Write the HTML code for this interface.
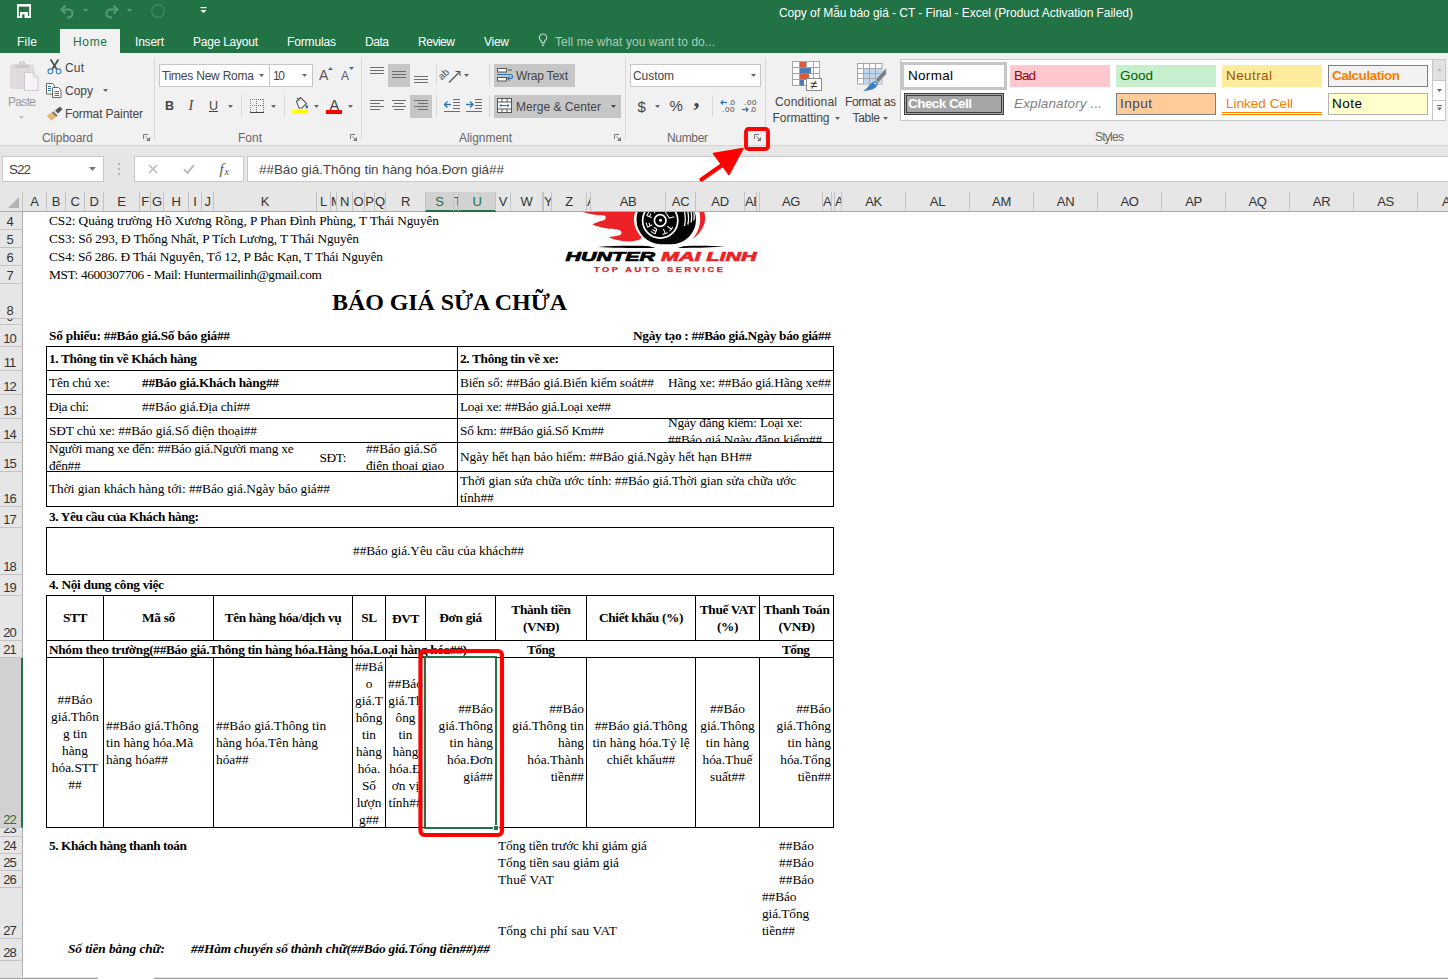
<!DOCTYPE html>
<html lang="vi"><head><meta charset="utf-8"><title>Excel</title><style>
html,body{margin:0;padding:0;background:#fff;}
body{width:1448px;height:979px;position:relative;overflow:hidden;font-family:"Liberation Sans",sans-serif;}
div,svg{position:absolute;box-sizing:border-box;}
.t{white-space:pre;}
.c{overflow:hidden;font-family:"Liberation Serif",serif;font-size:13.333px;color:#000;line-height:17px;white-space:pre;}
svg{overflow:visible;}
svg text{white-space:pre;}
</style></head><body>
<div style="left:0px;top:0px;width:1448px;height:53px;background:#217346;"></div>
<div style="left:0px;top:53px;width:1448px;height:92px;background:#f1f1f1;"></div>
<div style="left:0px;top:145px;width:1448px;height:1px;background:#d4d4d4;"></div>
<div style="left:0px;top:146px;width:1448px;height:65px;background:#e6e6e6;"></div>
<div style="left:60px;top:29px;width:60px;height:25px;background:#f1f1f1;"></div>
<svg style="left:17px;top:4px;" width="14" height="14" viewBox="0 0 14 14"><rect x="0.900" y="0.900" width="12.200" height="12.200" fill="none" stroke="#fff" stroke-width="1.800"/><rect x="0" y="0" width="14" height="2.600" fill="#fff"/><rect x="3" y="8" width="8" height="5.500" fill="#fff"/><rect x="5.200" y="10.300" width="2.300" height="3.700" fill="#217346"/></svg>
<svg style="left:60px;top:4px;" width="15" height="14" viewBox="0 0 15 14"><path d="M1.5 5.5h7a4 4 0 0 1 0 8h-1.5" fill="none" stroke="#5a9a77" stroke-width="2"/><path d="M5.5 1.5l-4 4l4 4" fill="none" stroke="#5a9a77" stroke-width="2"/></svg>
<svg style="left:83px;top:9px;" width="5" height="3" viewBox="0 0 5 3"><path d="M0 0h5l-2.5 3z" fill="#5a9a77"/></svg>
<svg style="left:104px;top:4px;" width="15" height="14" viewBox="0 0 15 14"><path d="M13.5 5.5h-7a4 4 0 0 0 0 8h1.5" fill="none" stroke="#5a9a77" stroke-width="2"/><path d="M9.5 1.5l4 4l-4 4" fill="none" stroke="#5a9a77" stroke-width="2"/></svg>
<svg style="left:127px;top:9px;" width="5" height="3" viewBox="0 0 5 3"><path d="M0 0h5l-2.5 3z" fill="#5a9a77"/></svg>
<svg style="left:151px;top:4px;" width="14" height="14" viewBox="0 0 14 14"><circle cx="7" cy="7" r="6.3" fill="none" stroke="#3f8a62" stroke-width="1.2"/></svg>
<svg style="left:200px;top:7px;" width="7" height="7" viewBox="0 0 7 7"><rect x="0.5" y="0" width="6" height="1.2" fill="#fff"/><path d="M0.5 3h6l-3 3.2z" fill="#fff"/></svg>
<div class="t" style="left:779px;top:5px;height:16px;line-height:16px;font-family:'Liberation Sans', sans-serif;font-size:12px;color:#fff;font-weight:normal;font-style:normal;letter-spacing:-0.049px;">Copy of Mẫu báo giá - CT - Final - Excel (Product Activation Failed)</div>
<div class="t" style="left:17px;top:34px;height:16px;line-height:16px;font-family:'Liberation Sans', sans-serif;font-size:12px;color:#fff;font-weight:normal;font-style:normal;letter-spacing:0.219px;">File</div>
<div class="t" style="left:73px;top:34px;height:16px;line-height:16px;font-family:'Liberation Sans', sans-serif;font-size:12px;color:#217346;font-weight:normal;font-style:normal;letter-spacing:0.661px;">Home</div>
<div class="t" style="left:135px;top:34px;height:16px;line-height:16px;font-family:'Liberation Sans', sans-serif;font-size:12px;color:#fff;font-weight:normal;font-style:normal;letter-spacing:-0.203px;">Insert</div>
<div class="t" style="left:193px;top:34px;height:16px;line-height:16px;font-family:'Liberation Sans', sans-serif;font-size:12px;color:#fff;font-weight:normal;font-style:normal;letter-spacing:-0.239px;">Page Layout</div>
<div class="t" style="left:287px;top:34px;height:16px;line-height:16px;font-family:'Liberation Sans', sans-serif;font-size:12px;color:#fff;font-weight:normal;font-style:normal;letter-spacing:-0.145px;">Formulas</div>
<div class="t" style="left:365px;top:34px;height:16px;line-height:16px;font-family:'Liberation Sans', sans-serif;font-size:12px;color:#fff;font-weight:normal;font-style:normal;letter-spacing:-0.453px;">Data</div>
<div class="t" style="left:418px;top:34px;height:16px;line-height:16px;font-family:'Liberation Sans', sans-serif;font-size:12px;color:#fff;font-weight:normal;font-style:normal;letter-spacing:-0.472px;">Review</div>
<div class="t" style="left:484px;top:34px;height:16px;line-height:16px;font-family:'Liberation Sans', sans-serif;font-size:12px;color:#fff;font-weight:normal;font-style:normal;letter-spacing:-0.266px;">View</div>
<svg style="left:538px;top:33px;" width="10" height="15" viewBox="0 0 10 15"><path d="M5 1a3.6 3.6 0 0 0-2.2 6.5c.6.6.8 1.2.8 2h2.8c0-.8.2-1.4.8-2A3.6 3.6 0 0 0 5 1z" fill="none" stroke="#b7d5c3" stroke-width="1.1"/><path d="M3.6 11h2.8M3.9 12.6h2.2" stroke="#b7d5c3" stroke-width="1"/></svg>
<div class="t" style="left:555px;top:34px;height:16px;line-height:16px;font-family:'Liberation Sans', sans-serif;font-size:12px;color:#a9cdb8;font-weight:normal;font-style:normal;letter-spacing:0.066px;">Tell me what you want to do...</div>
<svg style="left:10px;top:61px;" width="29" height="31" viewBox="0 0 29 31"><rect x="0" y="3.500" width="24" height="24.500" rx="1.500" fill="#dedade"/><path d="M5 3.500h14v3.500h-14z" fill="#cbc7cb"/><path d="M9 3.500v-2a1 1 0 0 1 1-1h4a1 1 0 0 1 1 1v2z" fill="#cbc7cb"/><rect x="11" y="1.500" width="2" height="1.500" fill="#ecebec"/><path d="M14.500 11.500h9l4.500 4.500v13.500h-13.500z" fill="#f6f2f8" stroke="#cfcccf"/><path d="M23.500 11.500v4.500h4.500" fill="none" stroke="#cfcccf"/></svg>
<div class="t" style="left:8px;top:94px;height:16px;line-height:16px;font-family:'Liberation Sans', sans-serif;font-size:12px;color:#9a9a9a;font-weight:normal;font-style:normal;letter-spacing:-0.672px;">Paste</div>
<svg style="left:19px;top:116px;" width="5" height="3" viewBox="0 0 5 3"><path d="M0 0h5l-2.5 3z" fill="#bdbdbd"/></svg>
<svg style="left:47px;top:59px;" width="15" height="16" viewBox="0 0 15 16"><path d="M3.600 0.500L9.600 10M11.400 0.500L5.400 10" stroke="#505050" stroke-width="1.800" fill="none"/><circle cx="3.400" cy="12.300" r="2.400" fill="none" stroke="#3b7fc4" stroke-width="1.100"/><circle cx="11.600" cy="12.300" r="2.400" fill="none" stroke="#3b7fc4" stroke-width="1.100"/></svg>
<div class="t" style="left:65px;top:60px;height:16px;line-height:16px;font-family:'Liberation Sans', sans-serif;font-size:12px;color:#444;font-weight:normal;font-style:normal;letter-spacing:0.156px;">Cut</div>
<svg style="left:46px;top:83px;" width="16" height="15" viewBox="0 0 16 15"><path d="M0.5 0.5h6l2 2v8.5h-8z" fill="#fff" stroke="#666"/><path d="M6.5 4.5h6l2.5 2.5v7.5h-8.5z" fill="#fff" stroke="#666"/><path d="M2 3.5h3M2 5.5h3M2 7.5h3" stroke="#2e75b6" stroke-width="1"/><path d="M8.5 8.5h4.5M8.5 10.5h4.5M8.5 12.5h4.5" stroke="#2e75b6" stroke-width="1"/></svg>
<div class="t" style="left:65px;top:83px;height:16px;line-height:16px;font-family:'Liberation Sans', sans-serif;font-size:12px;color:#444;font-weight:normal;font-style:normal;letter-spacing:-0.005px;">Copy</div>
<svg style="left:103px;top:89px;" width="5" height="3" viewBox="0 0 5 3"><path d="M0 0h5l-2.5 3z" fill="#666"/></svg>
<svg style="left:46px;top:106px;" width="17" height="15" viewBox="0 0 17 15"><path d="M9 4.5l5-4l2.5 2.7l-4.5 4.3z" fill="#555"/><path d="M7.3 5.2l4.4 4.3l-1.7 1.6l-4.3-4.3z" fill="#777"/><path d="M0.5 9.5l5.2-2.8l4.3 4.3l-4.5 3.8z" fill="#e8b86f"/></svg>
<div class="t" style="left:65px;top:106px;height:16px;line-height:16px;font-family:'Liberation Sans', sans-serif;font-size:12px;color:#444;font-weight:normal;font-style:normal;letter-spacing:-0.105px;">Format Painter</div>
<div class="t" style="left:42px;top:129.5px;height:16px;line-height:16px;font-family:'Liberation Sans', sans-serif;font-size:12px;color:#666;font-weight:normal;font-style:normal;letter-spacing:-0.047px;">Clipboard</div>
<svg style="left:143px;top:134px;" width="7" height="7" viewBox="0 0 7 7"><path d="M0.500 5V0.500H5" fill="none" stroke="#777" stroke-width="1"/><path d="M2.500 2.500l3 3" fill="none" stroke="#777" stroke-width="1"/><path d="M7 3v4h-4z" fill="#777"/></svg>
<div style="left:154px;top:57px;width:1px;height:83px;background:#d8d8d8;"></div>
<div style="left:159px;top:64px;width:111px;height:23px;background:#fff;border:1px solid #c6c6c6;"></div>
<div style="left:269px;top:64px;width:44px;height:23px;background:#fff;border:1px solid #c6c6c6;"></div>
<div class="t" style="left:162px;top:68px;height:16px;line-height:16px;font-family:'Liberation Sans', sans-serif;font-size:12px;color:#444;font-weight:normal;font-style:normal;letter-spacing:-0.224px;">Times New Roma</div>
<svg style="left:259px;top:74px;" width="5" height="3" viewBox="0 0 5 3"><path d="M0 0h5l-2.5 3z" fill="#666"/></svg>
<div class="t" style="left:273px;top:68px;height:16px;line-height:16px;font-family:'Liberation Sans', sans-serif;font-size:12px;color:#444;font-weight:normal;font-style:normal;letter-spacing:-1.359px;">10</div>
<svg style="left:302px;top:74px;" width="5" height="3" viewBox="0 0 5 3"><path d="M0 0h5l-2.5 3z" fill="#666"/></svg>
<div class="t" style="left:319px;top:66px;height:18px;line-height:18px;font-family:'Liberation Sans', sans-serif;font-size:14px;color:#555;font-weight:normal;font-style:normal;">A</div>
<svg style="left:328px;top:67px;" width="5" height="3" viewBox="0 0 5 3"><path d="M0 3h5l-2.5-3z" fill="#2e75b6"/></svg>
<div class="t" style="left:341px;top:68px;height:16px;line-height:16px;font-family:'Liberation Sans', sans-serif;font-size:12px;color:#555;font-weight:normal;font-style:normal;">A</div>
<svg style="left:349px;top:67px;" width="5" height="3" viewBox="0 0 5 3"><path d="M0 0h5l-2.5 3z" fill="#2e75b6"/></svg>
<div class="t" style="left:165px;top:98px;height:16px;line-height:16px;font-family:'Liberation Sans', sans-serif;font-size:12.5px;color:#444;font-weight:bold;font-style:normal;">B</div>
<div class="t" style="left:188.5px;top:97px;height:17px;line-height:17px;font-family:'Liberation Serif', serif;font-size:14.5px;color:#444;font-weight:normal;font-style:italic;">I</div>
<div class="t" style="left:209px;top:98px;height:16px;line-height:16px;font-family:'Liberation Sans', sans-serif;font-size:12.5px;color:#444;font-weight:normal;font-style:normal;text-decoration:underline;">U</div>
<svg style="left:228px;top:105px;" width="5" height="3" viewBox="0 0 5 3"><path d="M0 0h5l-2.5 3z" fill="#666"/></svg>
<div style="left:241px;top:95px;width:1px;height:22px;background:#d8d8d8;"></div>
<svg style="left:250px;top:99px;" width="14" height="14" viewBox="0 0 14 14"><path d="M0 0.500h14M0 6.500h14M0.500 0v13M6.500 0v13M13.500 0v13" stroke="#777" stroke-width="1" stroke-dasharray="1 1" fill="none" shape-rendering="crispEdges"/><path d="M0 13.500h14" stroke="#444" stroke-width="1" shape-rendering="crispEdges"/></svg>
<svg style="left:271px;top:105px;" width="5" height="3" viewBox="0 0 5 3"><path d="M0 0h5l-2.5 3z" fill="#666"/></svg>
<div style="left:284px;top:95px;width:1px;height:22px;background:#d8d8d8;"></div>
<svg style="left:292px;top:97px;" width="17" height="12" viewBox="0 0 17 12"><path d="M4.5 4.5l4-4l6 6l-4.5 4.5h-3z" fill="#fff" stroke="#555" stroke-width="1.1"/><path d="M5 0.8l2.5 2.5" stroke="#555" stroke-width="1.1"/><path d="M14.8 7.2c.9 1.4 1.4 2.2 1.4 2.9a1.3 1.3 0 0 1-2.7 0c0-.7.5-1.5 1.300-2.900z" fill="#2e75b6"/></svg>
<div style="left:292px;top:110px;width:16px;height:4px;background:#ffff00;"></div>
<svg style="left:314px;top:105px;" width="5" height="3" viewBox="0 0 5 3"><path d="M0 0h5l-2.5 3z" fill="#666"/></svg>
<div class="t" style="left:329.5px;top:97px;height:16px;line-height:16px;font-family:'Liberation Sans', sans-serif;font-size:14.5px;color:#444;font-weight:normal;font-style:normal;">A</div>
<div style="left:326px;top:110px;width:16px;height:4px;background:#ff0000;"></div>
<svg style="left:348px;top:105px;" width="5" height="3" viewBox="0 0 5 3"><path d="M0 0h5l-2.5 3z" fill="#666"/></svg>
<div class="t" style="left:238px;top:129.5px;height:16px;line-height:16px;font-family:'Liberation Sans', sans-serif;font-size:12px;color:#666;font-weight:normal;font-style:normal;letter-spacing:-0.005px;">Font</div>
<svg style="left:350px;top:134px;" width="7" height="7" viewBox="0 0 7 7"><path d="M0.500 5V0.500H5" fill="none" stroke="#777" stroke-width="1"/><path d="M2.500 2.500l3 3" fill="none" stroke="#777" stroke-width="1"/><path d="M7 3v4h-4z" fill="#777"/></svg>
<div style="left:361px;top:57px;width:1px;height:83px;background:#d8d8d8;"></div>
<div style="left:388px;top:64px;width:22px;height:23px;background:#c6c6c6;"></div>
<div style="left:410px;top:95px;width:22px;height:23px;background:#c6c6c6;"></div>
<svg style="left:370px;top:67px;" width="14" height="9" viewBox="0 0 14 9"><rect x="0" y="0" width="14" height="1" fill="#6e6e6e"/><rect x="0" y="3" width="14" height="1" fill="#6e6e6e"/><rect x="0" y="6" width="14" height="1" fill="#6e6e6e"/></svg>
<svg style="left:392px;top:71px;" width="14" height="9" viewBox="0 0 14 9"><rect x="0" y="0" width="14" height="1" fill="#6e6e6e"/><rect x="0" y="3" width="14" height="1" fill="#6e6e6e"/><rect x="0" y="6" width="14" height="1" fill="#6e6e6e"/></svg>
<svg style="left:414px;top:76px;" width="14" height="9" viewBox="0 0 14 9"><rect x="0" y="0" width="14" height="1" fill="#6e6e6e"/><rect x="0" y="3" width="14" height="1" fill="#6e6e6e"/><rect x="0" y="6" width="14" height="1" fill="#6e6e6e"/></svg>
<div style="left:436px;top:64px;width:1px;height:22px;background:#d8d8d8;"></div>
<svg style="left:444px;top:67px;" width="17" height="16" viewBox="0 0 17 16"><path d="M5 15.500L15.500 5" stroke="#555" stroke-width="1.200" fill="none"/><path d="M11.500 4.500h4.500v4.500" stroke="#555" stroke-width="1.100" fill="none"/></svg>
<div class="t" style="left:443px;top:72px;height:10px;line-height:10px;font-family:'Liberation Sans', sans-serif;font-size:10px;color:#555;font-weight:normal;font-style:normal;transform:rotate(-42deg);transform-origin:0 100%;">ab</div>
<svg style="left:464px;top:74px;" width="5" height="3" viewBox="0 0 5 3"><path d="M0 0h5l-2.5 3z" fill="#666"/></svg>
<div style="left:489px;top:64px;width:1px;height:22px;background:#d8d8d8;"></div>
<div style="left:494px;top:64px;width:81px;height:23px;background:#c6c6c6;"></div>
<svg style="left:497px;top:68px;" width="17" height="15" viewBox="0 0 17 15"><rect x="0.5" y="0.500" width="9" height="3.500" fill="#fff" stroke="#555"/><rect x="0.5" y="9.5" width="9" height="3.5" fill="#fff" stroke="#555"/><path d="M0 6.5h13.500a2 2 0 0 1 0 4h-2.5" fill="none" stroke="#2e75b6" stroke-width="1.1"/><path d="M12.500 8.5l-2 2l2 2" fill="none" stroke="#2e75b6" stroke-width="1.1"/><path d="M11 2h4" stroke="#555"/></svg>
<div class="t" style="left:516px;top:68px;height:16px;line-height:16px;font-family:'Liberation Sans', sans-serif;font-size:12px;color:#444;font-weight:normal;font-style:normal;letter-spacing:-0.197px;">Wrap Text</div>
<svg style="left:370px;top:100px;" width="14" height="12" viewBox="0 0 14 12"><rect x="0" y="0" width="14" height="1" fill="#6e6e6e"/><rect x="0" y="3" width="10" height="1" fill="#6e6e6e"/><rect x="0" y="6" width="14" height="1" fill="#6e6e6e"/><rect x="0" y="9" width="10" height="1" fill="#6e6e6e"/></svg>
<svg style="left:392px;top:100px;" width="14" height="12" viewBox="0 0 14 12"><rect x="0.0" y="0" width="14" height="1" fill="#6e6e6e"/><rect x="2.0" y="3" width="10" height="1" fill="#6e6e6e"/><rect x="0.0" y="6" width="14" height="1" fill="#6e6e6e"/><rect x="2.0" y="9" width="10" height="1" fill="#6e6e6e"/></svg>
<svg style="left:414px;top:100px;" width="14" height="12" viewBox="0 0 14 12"><rect x="0" y="0" width="14" height="1" fill="#6e6e6e"/><rect x="4" y="3" width="10" height="1" fill="#6e6e6e"/><rect x="0" y="6" width="14" height="1" fill="#6e6e6e"/><rect x="4" y="9" width="10" height="1" fill="#6e6e6e"/></svg>
<div style="left:436px;top:95px;width:1px;height:22px;background:#d8d8d8;"></div>
<svg style="left:444px;top:99px;" width="17" height="13" viewBox="0 0 17 13"><path d="M0 5.500h7" stroke="#2e75b6" stroke-width="1.4"/><path d="M3.500 2.5l-3 3l3 3" fill="none" stroke="#2e75b6" stroke-width="1.4"/><path d="M9 0.500h7M9 3.500h7M9 6.500h7M9 9.500h7M0 12.500h16" stroke="#6e6e6e"/></svg>
<svg style="left:466px;top:99px;" width="17" height="13" viewBox="0 0 17 13"><path d="M0 5.500h7" stroke="#2e75b6" stroke-width="1.4"/><path d="M4 2.5l3 3l-3 3" fill="none" stroke="#2e75b6" stroke-width="1.4"/><path d="M9 0.500h7M9 3.500h7M9 6.500h7M9 9.500h7M0 12.500h16" stroke="#6e6e6e"/></svg>
<div style="left:489px;top:95px;width:1px;height:22px;background:#d8d8d8;"></div>
<div style="left:494px;top:95px;width:127px;height:23px;background:#c6c6c6;"></div>
<svg style="left:497px;top:98px;" width="16" height="16" viewBox="0 0 16 16"><rect x="0.500" y="0.500" width="14" height="14" fill="#fff" stroke="#555"/><path d="M0.500 4h14M0.500 11h14M5 0.500v3.500M10 0.500v3.500M5 11v3.500M10 11v3.500" stroke="#555"/><path d="M3 7.500h9" stroke="#2e75b6"/><path d="M4.500 6l-1.500 1.500l1.500 1.500M10.500 6l1.500 1.500l-1.500 1.500" fill="none" stroke="#2e75b6"/></svg>
<div class="t" style="left:516px;top:99px;height:16px;line-height:16px;font-family:'Liberation Sans', sans-serif;font-size:12px;color:#444;font-weight:normal;font-style:normal;letter-spacing:0.023px;">Merge &amp; Center</div>
<svg style="left:611px;top:105px;" width="5" height="3" viewBox="0 0 5 3"><path d="M0 0h5l-2.5 3z" fill="#444"/></svg>
<div class="t" style="left:459px;top:129.5px;height:16px;line-height:16px;font-family:'Liberation Sans', sans-serif;font-size:12px;color:#666;font-weight:normal;font-style:normal;letter-spacing:-0.047px;">Alignment</div>
<svg style="left:614px;top:134px;" width="7" height="7" viewBox="0 0 7 7"><path d="M0.500 5V0.500H5" fill="none" stroke="#777" stroke-width="1"/><path d="M2.500 2.500l3 3" fill="none" stroke="#777" stroke-width="1"/><path d="M7 3v4h-4z" fill="#777"/></svg>
<div style="left:625px;top:57px;width:1px;height:83px;background:#d8d8d8;"></div>
<div style="left:630px;top:64px;width:131px;height:23px;background:#fff;border:1px solid #c6c6c6;"></div>
<div class="t" style="left:633px;top:68px;height:16px;line-height:16px;font-family:'Liberation Sans', sans-serif;font-size:12px;color:#444;font-weight:normal;font-style:normal;letter-spacing:-0.069px;">Custom</div>
<svg style="left:751px;top:74px;" width="5" height="3" viewBox="0 0 5 3"><path d="M0 0h5l-2.5 3z" fill="#666"/></svg>
<div class="t" style="left:637.5px;top:96.5px;height:20px;line-height:20px;font-family:'Liberation Sans', sans-serif;font-size:15px;color:#444;font-weight:normal;font-style:normal;">$</div>
<svg style="left:655px;top:105px;" width="5" height="3" viewBox="0 0 5 3"><path d="M0 0h5l-2.5 3z" fill="#666"/></svg>
<div class="t" style="left:669.5px;top:97px;height:18px;line-height:18px;font-family:'Liberation Sans', sans-serif;font-size:15px;color:#444;font-weight:normal;font-style:normal;letter-spacing:-0.844px;">%</div>
<div class="t" style="left:693.5px;top:85.5px;height:24px;line-height:24px;font-family:'Liberation Serif', serif;font-size:24px;color:#444;font-weight:bold;font-style:normal;">,</div>
<div style="left:712px;top:95px;width:1px;height:22px;background:#d8d8d8;"></div>
<div class="t" style="left:729px;top:97.5px;height:9px;line-height:9px;font-family:'Liberation Sans', sans-serif;font-size:8px;color:#444;font-weight:normal;font-style:normal;letter-spacing:-0.672px;">.0</div>
<div class="t" style="left:722px;top:105px;height:9px;line-height:9px;font-family:'Liberation Sans', sans-serif;font-size:8px;color:#444;font-weight:normal;font-style:normal;letter-spacing:0.688px;">.00</div>
<svg style="left:720px;top:100px;" width="7" height="5" viewBox="0 0 7 5"><path d="M7 2.500h-6" stroke="#2e75b6" stroke-width="1.2"/><path d="M3 0.500l-2 2l2 2" fill="none" stroke="#2e75b6" stroke-width="1.2"/></svg>
<div class="t" style="left:744px;top:97.5px;height:9px;line-height:9px;font-family:'Liberation Sans', sans-serif;font-size:8px;color:#444;font-weight:normal;font-style:normal;letter-spacing:0.688px;">.00</div>
<div class="t" style="left:750px;top:105px;height:9px;line-height:9px;font-family:'Liberation Sans', sans-serif;font-size:8px;color:#444;font-weight:normal;font-style:normal;letter-spacing:-0.672px;">.0</div>
<svg style="left:742px;top:107px;" width="7" height="5" viewBox="0 0 7 5"><path d="M0 2.500h6" stroke="#2e75b6" stroke-width="1.2"/><path d="M4 0.500l2 2l-2 2" fill="none" stroke="#2e75b6" stroke-width="1.2"/></svg>
<div class="t" style="left:667px;top:129.5px;height:16px;line-height:16px;font-family:'Liberation Sans', sans-serif;font-size:12px;color:#666;font-weight:normal;font-style:normal;letter-spacing:-0.338px;">Number</div>
<svg style="left:754px;top:134px;" width="7" height="7" viewBox="0 0 7 7"><path d="M0.500 5V0.500H5" fill="none" stroke="#777" stroke-width="1"/><path d="M2.500 2.500l3 3" fill="none" stroke="#777" stroke-width="1"/><path d="M7 3v4h-4z" fill="#777"/></svg>
<div style="left:765px;top:57px;width:1px;height:83px;background:#d8d8d8;"></div>
<svg style="left:0px;top:0px;" width="1448" height="130" viewBox="0 0 1448 130"><rect x="792.500" y="61.500" width="27" height="24" fill="#fff" stroke="#a6a6a6"/><rect x="800" y="62" width="6" height="5.500" fill="#dc5b3c"/><rect x="800" y="68" width="11" height="5.500" fill="#4a7ebb"/><rect x="800" y="74" width="9" height="5.500" fill="#dc5b3c"/><rect x="800" y="80" width="4" height="5.500" fill="#4a7ebb"/><path d="M799.500 61.500v24M806.500 61.500v24M813.500 61.500v24M792.500 67.500h27M792.500 73.500h27M792.500 79.500h27" stroke="#a6a6a6" fill="none"/><rect x="800" y="62" width="6" height="5.500" fill="#dc5b3c"/><rect x="800" y="68" width="11" height="5.500" fill="#4a7ebb"/><rect x="800" y="74" width="9" height="5.500" fill="#dc5b3c"/><rect x="800" y="80" width="4" height="5.500" fill="#4a7ebb"/><rect x="806.500" y="78.500" width="15" height="12" fill="#fff" stroke="#8a8a8a"/></svg>
<div class="t" style="left:810px;top:76.5px;height:16px;line-height:16px;font-family:'Liberation Sans', sans-serif;font-size:13px;color:#333;font-weight:normal;font-style:normal;">≠</div>
<div class="t" style="left:775px;top:94px;height:16px;line-height:16px;font-family:'Liberation Sans', sans-serif;font-size:12px;color:#444;font-weight:normal;font-style:normal;letter-spacing:0.195px;">Conditional</div>
<div class="t" style="left:772.5px;top:110px;height:16px;line-height:16px;font-family:'Liberation Sans', sans-serif;font-size:12px;color:#444;font-weight:normal;font-style:normal;letter-spacing:-0.040px;">Formatting</div>
<svg style="left:834.5px;top:116.5px;" width="5" height="3" viewBox="0 0 5 3"><path d="M0 0h5l-2.5 3z" fill="#666"/></svg>
<svg style="left:0px;top:0px;" width="1448" height="130" viewBox="0 0 1448 130"><rect x="857.500" y="63.500" width="24.500" height="20.500" fill="#fff" stroke="#a6a6a6"/><rect x="864" y="69" width="18" height="15" fill="#bdd7ee"/><path d="M863.500 63.500v20.500M869.500 63.500v20.500M875.500 63.500v20.500M857.500 68.500h24.500M857.500 73.500h24.500M857.500 78.500h24.500" stroke="#a6a6a6" fill="none"/><path d="M886.200 67.800l0.300 6.200l-8.200 8.700l-3.200-3z" fill="#7f7f7f" stroke="#f1f1f1" stroke-width="0.600"/><path d="M874.300 81.300c2.500-0.500 4.200 1.200 3.300 3.500c-1.500 4-7 6.200-14.500 6c4.500-2 6.500-7.500 11.200-9.500z" fill="#3f7fc1"/><path d="M874.600 82.600c1.300 0 2.300 1 1.800 2.300c-0.600-0.900-1.700-1.300-2.900-1z" fill="#fff"/></svg>
<div class="t" style="left:845px;top:94px;height:16px;line-height:16px;font-family:'Liberation Sans', sans-serif;font-size:12px;color:#444;font-weight:normal;font-style:normal;letter-spacing:-0.377px;">Format as</div>
<div class="t" style="left:852.5px;top:110px;height:16px;line-height:16px;font-family:'Liberation Sans', sans-serif;font-size:12px;color:#444;font-weight:normal;font-style:normal;letter-spacing:-0.297px;">Table</div>
<svg style="left:883px;top:116.5px;" width="5" height="3" viewBox="0 0 5 3"><path d="M0 0h5l-2.5 3z" fill="#666"/></svg>
<div style="left:900px;top:59px;width:546px;height:62px;background:#fff;border:1px solid #c6c6c6;"></div>
<div style="left:1432px;top:60px;width:1px;height:60px;background:#c6c6c6;"></div>
<div style="left:1433px;top:60px;width:12px;height:20px;background:#e1e1e1;"></div>
<div style="left:1433px;top:80px;width:12px;height:1px;background:#c6c6c6;"></div>
<div style="left:1433px;top:100px;width:12px;height:1px;background:#c6c6c6;"></div>
<svg style="left:1437px;top:68px;" width="5" height="3" viewBox="0 0 5 3"><path d="M0 3h5l-2.500-3z" fill="#bdbdbd"/></svg>
<svg style="left:1437px;top:89px;" width="5" height="3" viewBox="0 0 5 3"><path d="M0 0h5l-2.500 3z" fill="#666"/></svg>
<svg style="left:1437px;top:105px;" width="5" height="6" viewBox="0 0 5 6"><path d="M0 0.500h5" stroke="#666"/><path d="M0 2.500h5l-2.500 3z" fill="#666"/></svg>
<div style="left:901px;top:62px;width:106px;height:28px;background:#fff;border:3px solid #c6c6c6;"></div>
<div class="t" style="left:908px;top:67px;height:17px;line-height:17px;font-family:'Liberation Sans', sans-serif;font-size:13.5px;color:#000;font-weight:normal;font-style:normal;letter-spacing:0.297px;">Normal</div>
<div style="left:1010px;top:65px;width:100px;height:22px;background:#ffc7ce;"></div>
<div class="t" style="left:1014px;top:67px;height:17px;line-height:17px;font-family:'Liberation Sans', sans-serif;font-size:13.5px;color:#9c0006;font-weight:normal;font-style:normal;letter-spacing:-1.016px;">Bad</div>
<div style="left:1116px;top:65px;width:100px;height:22px;background:#c6efce;"></div>
<div class="t" style="left:1120px;top:67px;height:17px;line-height:17px;font-family:'Liberation Sans', sans-serif;font-size:13.5px;color:#006100;font-weight:normal;font-style:normal;letter-spacing:-0.010px;">Good</div>
<div style="left:1222px;top:65px;width:100px;height:22px;background:#ffeb9c;"></div>
<div class="t" style="left:1226px;top:67px;height:17px;line-height:17px;font-family:'Liberation Sans', sans-serif;font-size:13.5px;color:#9c5700;font-weight:normal;font-style:normal;letter-spacing:0.411px;">Neutral</div>
<div style="left:1328px;top:65px;width:100px;height:22px;background:#f2f2f2;border:1px solid #7f7f7f;"></div>
<div class="t" style="left:1332px;top:67px;height:17px;line-height:17px;font-family:'Liberation Sans', sans-serif;font-size:13.5px;color:#fa7d00;font-weight:bold;font-style:normal;letter-spacing:-0.477px;">Calculation</div>
<div style="left:904px;top:93px;width:100px;height:22px;background:#a5a5a5;border:3px double #3f3f3f;"></div>
<div class="t" style="left:908px;top:95px;height:17px;line-height:17px;font-family:'Liberation Sans', sans-serif;font-size:13.5px;color:#fff;font-weight:bold;font-style:normal;letter-spacing:-0.559px;">Check Cell</div>
<div class="t" style="left:1014px;top:95px;height:17px;line-height:17px;font-family:'Liberation Sans', sans-serif;font-size:13.5px;color:#7f7f7f;font-weight:normal;font-style:italic;letter-spacing:0.122px;">Explanatory ...</div>
<div style="left:1116px;top:93px;width:100px;height:22px;background:#ffcc99;border:1px solid #7f7f7f;"></div>
<div class="t" style="left:1120px;top:95px;height:17px;line-height:17px;font-family:'Liberation Sans', sans-serif;font-size:13.5px;color:#3f3f76;font-weight:normal;font-style:normal;letter-spacing:0.492px;">Input</div>
<div class="t" style="left:1226px;top:95px;height:17px;line-height:17px;font-family:'Liberation Sans', sans-serif;font-size:13.5px;color:#fa7d00;font-weight:normal;font-style:normal;letter-spacing:0.020px;">Linked Cell</div>
<div style="left:1222px;top:112px;width:100px;height:3px;border-top:1px solid #ff8001;border-bottom:1px solid #ff8001;"></div>
<div style="left:1328px;top:93px;width:100px;height:22px;background:#ffffcc;border:1px solid #b2b2b2;"></div>
<div class="t" style="left:1332px;top:95px;height:17px;line-height:17px;font-family:'Liberation Sans', sans-serif;font-size:13.5px;color:#000;font-weight:normal;font-style:normal;letter-spacing:0.490px;">Note</div>
<div class="t" style="left:1095px;top:129px;height:16px;line-height:16px;font-family:'Liberation Sans', sans-serif;font-size:12px;color:#666;font-weight:normal;font-style:normal;letter-spacing:-0.738px;">Styles</div>
<div style="left:2px;top:156px;width:102px;height:26px;background:#fff;border:1px solid #c8c8c8;"></div>
<div class="t" style="left:9px;top:161px;height:17px;line-height:17px;font-family:'Liberation Sans', sans-serif;font-size:13.5px;color:#444;font-weight:normal;font-style:normal;letter-spacing:-1.016px;">S22</div>
<svg style="left:89px;top:167px;" width="7" height="4" viewBox="0 0 7 4"><path d="M0 0h7l-3.500 4z" fill="#777"/></svg>
<div style="left:118px;top:163px;width:2px;height:2px;background:#b5b5b5;"></div>
<div style="left:118px;top:168px;width:2px;height:2px;background:#b5b5b5;"></div>
<div style="left:118px;top:173px;width:2px;height:2px;background:#b5b5b5;"></div>
<div style="left:134px;top:156px;width:110px;height:26px;background:#fff;border:1px solid #c8c8c8;"></div>
<svg style="left:148px;top:164px;" width="10" height="10" viewBox="0 0 10 10"><path d="M1 1l8 8M9 1l-8 8" stroke="#bdbdbd" stroke-width="1.700"/></svg>
<svg style="left:183px;top:164px;" width="12" height="10" viewBox="0 0 12 10"><path d="M1 5.500l3.500 3.500l6.500-8" fill="none" stroke="#bdbdbd" stroke-width="2"/></svg>
<div class="t" style="left:219.5px;top:160px;height:18px;line-height:18px;font-family:'Liberation Serif', serif;font-size:15px;color:#555;font-weight:normal;font-style:italic;">f</div>
<div class="t" style="left:224.5px;top:166px;height:12px;line-height:12px;font-family:'Liberation Serif', serif;font-size:10px;color:#555;font-weight:normal;font-style:italic;">x</div>
<div style="left:247px;top:156px;width:1201px;height:26px;background:#fff;border:1px solid #c8c8c8;border-right:0;"></div>
<div class="t" style="left:259px;top:161px;height:17px;line-height:17px;font-family:'Liberation Sans', sans-serif;font-size:13.5px;color:#444;font-weight:normal;font-style:normal;letter-spacing:-0.069px;">##Báo giá.Thông tin hàng hóa.Đơn giá##</div>
<div style="left:0px;top:211px;width:1448px;height:768px;background:#fff;"></div>
<div style="left:0px;top:190px;width:1448px;height:22px;background:#e6e6e6;border-bottom:1px solid #ababab;"></div>
<div style="left:425px;top:192px;width:71px;height:20px;background:#d2d2d2;border-bottom:2px solid #217346;"></div>
<svg style="left:8px;top:197px;" width="11" height="11" viewBox="0 0 11 11"><path d="M11 0v11h-11z" fill="#b4b4b4"/></svg>
<div style="left:22px;top:192px;width:1px;height:19px;background:#c3c3c3;"></div>
<div style="left:46px;top:192px;width:1px;height:19px;background:#c3c3c3;"></div>
<div style="left:23px;top:192px;width:23px;height:19px;overflow:hidden;text-align:center;line-height:19px;font-size:13px;color:#333;white-space:pre;letter-spacing:-0.300px;">A</div>
<div style="left:65px;top:192px;width:1px;height:19px;background:#c3c3c3;"></div>
<div style="left:47px;top:192px;width:18px;height:19px;overflow:hidden;text-align:center;line-height:19px;font-size:13px;color:#333;white-space:pre;letter-spacing:-0.300px;">B</div>
<div style="left:84px;top:192px;width:1px;height:19px;background:#c3c3c3;"></div>
<div style="left:66px;top:192px;width:18px;height:19px;overflow:hidden;text-align:center;line-height:19px;font-size:13px;color:#333;white-space:pre;letter-spacing:-0.300px;">C</div>
<div style="left:103px;top:192px;width:1px;height:19px;background:#c3c3c3;"></div>
<div style="left:85px;top:192px;width:18px;height:19px;overflow:hidden;text-align:center;line-height:19px;font-size:13px;color:#333;white-space:pre;letter-spacing:-0.300px;">D</div>
<div style="left:139px;top:192px;width:1px;height:19px;background:#c3c3c3;"></div>
<div style="left:104px;top:192px;width:35px;height:19px;overflow:hidden;text-align:center;line-height:19px;font-size:13px;color:#333;white-space:pre;letter-spacing:-0.300px;">E</div>
<div style="left:150px;top:192px;width:1px;height:19px;background:#c3c3c3;"></div>
<div style="left:140px;top:192px;width:10px;height:19px;overflow:hidden;text-align:center;line-height:19px;font-size:13px;color:#333;white-space:pre;letter-spacing:-0.300px;">F</div>
<div style="left:163px;top:192px;width:1px;height:19px;background:#c3c3c3;"></div>
<div style="left:151px;top:192px;width:12px;height:19px;overflow:hidden;text-align:center;line-height:19px;font-size:13px;color:#333;white-space:pre;letter-spacing:-0.300px;">G</div>
<div style="left:188px;top:192px;width:1px;height:19px;background:#c3c3c3;"></div>
<div style="left:164px;top:192px;width:24px;height:19px;overflow:hidden;text-align:center;line-height:19px;font-size:13px;color:#333;white-space:pre;letter-spacing:-0.300px;">H</div>
<div style="left:201px;top:192px;width:1px;height:19px;background:#c3c3c3;"></div>
<div style="left:189px;top:192px;width:12px;height:19px;overflow:hidden;text-align:center;line-height:19px;font-size:13px;color:#333;white-space:pre;letter-spacing:-0.300px;">I</div>
<div style="left:213px;top:192px;width:1px;height:19px;background:#c3c3c3;"></div>
<div style="left:202px;top:192px;width:11px;height:19px;overflow:hidden;text-align:center;line-height:19px;font-size:13px;color:#333;white-space:pre;letter-spacing:-0.300px;">J</div>
<div style="left:316px;top:192px;width:1px;height:19px;background:#c3c3c3;"></div>
<div style="left:214px;top:192px;width:102px;height:19px;overflow:hidden;text-align:center;line-height:19px;font-size:13px;color:#333;white-space:pre;letter-spacing:-0.300px;">K</div>
<div style="left:330px;top:192px;width:1px;height:19px;background:#c3c3c3;"></div>
<div style="left:317px;top:192px;width:13px;height:19px;overflow:hidden;text-align:center;line-height:19px;font-size:13px;color:#333;white-space:pre;letter-spacing:-0.300px;">L</div>
<div style="left:336px;top:192px;width:1px;height:19px;background:#c3c3c3;"></div>
<div style="left:331px;top:192px;width:5px;height:19px;overflow:hidden;text-align:center;line-height:19px;font-size:13px;color:#333;white-space:pre;letter-spacing:-0.300px;">M</div>
<div style="left:352px;top:192px;width:1px;height:19px;background:#c3c3c3;"></div>
<div style="left:337px;top:192px;width:15px;height:19px;overflow:hidden;text-align:center;line-height:19px;font-size:13px;color:#333;white-space:pre;letter-spacing:-0.300px;">N</div>
<div style="left:364px;top:192px;width:1px;height:19px;background:#c3c3c3;"></div>
<div style="left:353px;top:192px;width:11px;height:19px;overflow:hidden;text-align:center;line-height:19px;font-size:13px;color:#333;white-space:pre;letter-spacing:-0.300px;">O</div>
<div style="left:374px;top:192px;width:1px;height:19px;background:#c3c3c3;"></div>
<div style="left:365px;top:192px;width:9px;height:19px;overflow:hidden;text-align:center;line-height:19px;font-size:13px;color:#333;white-space:pre;letter-spacing:-0.300px;">P</div>
<div style="left:385px;top:192px;width:1px;height:19px;background:#c3c3c3;"></div>
<div style="left:375px;top:192px;width:10px;height:19px;overflow:hidden;text-align:center;line-height:19px;font-size:13px;color:#333;white-space:pre;letter-spacing:-0.300px;">Q</div>
<div style="left:425px;top:192px;width:1px;height:19px;background:#c3c3c3;"></div>
<div style="left:386px;top:192px;width:39px;height:19px;overflow:hidden;text-align:center;line-height:19px;font-size:13px;color:#333;white-space:pre;letter-spacing:-0.300px;">R</div>
<div style="left:453px;top:192px;width:1px;height:19px;background:#c3c3c3;"></div>
<div style="left:426px;top:192px;width:27px;height:19px;overflow:hidden;text-align:center;line-height:19px;font-size:13px;color:#217346;white-space:pre;letter-spacing:-0.300px;">S</div>
<div style="left:458px;top:192px;width:1px;height:19px;background:#c3c3c3;"></div>
<div style="left:454px;top:192px;width:4px;height:19px;overflow:hidden;text-align:center;line-height:19px;font-size:13px;color:#217346;white-space:pre;letter-spacing:-0.300px;">T</div>
<div style="left:495px;top:192px;width:1px;height:19px;background:#c3c3c3;"></div>
<div style="left:459px;top:192px;width:36px;height:19px;overflow:hidden;text-align:center;line-height:19px;font-size:13px;color:#217346;white-space:pre;letter-spacing:-0.300px;">U</div>
<div style="left:510px;top:192px;width:1px;height:19px;background:#c3c3c3;"></div>
<div style="left:496px;top:192px;width:14px;height:19px;overflow:hidden;text-align:center;line-height:19px;font-size:13px;color:#333;white-space:pre;letter-spacing:-0.300px;">V</div>
<div style="left:542px;top:192px;width:1px;height:19px;background:#c3c3c3;"></div>
<div style="left:511px;top:192px;width:31px;height:19px;overflow:hidden;text-align:center;line-height:19px;font-size:13px;color:#333;white-space:pre;letter-spacing:-0.300px;">W</div>
<div style="left:543px;top:192px;width:1px;height:19px;background:#c3c3c3;"></div>
<div style="left:551px;top:192px;width:1px;height:19px;background:#c3c3c3;"></div>
<div style="left:544px;top:192px;width:7px;height:19px;overflow:hidden;text-align:center;line-height:19px;font-size:13px;color:#333;white-space:pre;letter-spacing:-0.300px;">Y</div>
<div style="left:586px;top:192px;width:1px;height:19px;background:#c3c3c3;"></div>
<div style="left:552px;top:192px;width:34px;height:19px;overflow:hidden;text-align:center;line-height:19px;font-size:13px;color:#333;white-space:pre;letter-spacing:-0.300px;">Z</div>
<div style="left:590px;top:192px;width:1px;height:19px;background:#c3c3c3;"></div>
<div style="left:587px;top:192px;width:3px;height:19px;overflow:hidden;text-align:center;line-height:19px;font-size:13px;color:#333;white-space:pre;letter-spacing:-0.300px;">AA</div>
<div style="left:665px;top:192px;width:1px;height:19px;background:#c3c3c3;"></div>
<div style="left:591px;top:192px;width:74px;height:19px;overflow:hidden;text-align:center;line-height:19px;font-size:13px;color:#333;white-space:pre;letter-spacing:-0.300px;">AB</div>
<div style="left:695px;top:192px;width:1px;height:19px;background:#c3c3c3;"></div>
<div style="left:666px;top:192px;width:29px;height:19px;overflow:hidden;text-align:center;line-height:19px;font-size:13px;color:#333;white-space:pre;letter-spacing:-0.300px;">AC</div>
<div style="left:744px;top:192px;width:1px;height:19px;background:#c3c3c3;"></div>
<div style="left:696px;top:192px;width:48px;height:19px;overflow:hidden;text-align:center;line-height:19px;font-size:13px;color:#333;white-space:pre;letter-spacing:-0.300px;">AD</div>
<div style="left:756px;top:192px;width:1px;height:19px;background:#c3c3c3;"></div>
<div style="left:745px;top:192px;width:11px;height:19px;overflow:hidden;text-align:center;line-height:19px;font-size:13px;color:#333;white-space:pre;letter-spacing:-0.300px;">AE</div>
<div style="left:759px;top:192px;width:1px;height:19px;background:#c3c3c3;"></div>
<div style="left:822px;top:192px;width:1px;height:19px;background:#c3c3c3;"></div>
<div style="left:760px;top:192px;width:62px;height:19px;overflow:hidden;text-align:center;line-height:19px;font-size:13px;color:#333;white-space:pre;letter-spacing:-0.300px;">AG</div>
<div style="left:831px;top:192px;width:1px;height:19px;background:#c3c3c3;"></div>
<div style="left:823px;top:192px;width:8px;height:19px;overflow:hidden;text-align:center;line-height:19px;font-size:13px;color:#333;white-space:pre;letter-spacing:-0.300px;">AH</div>
<div style="left:834px;top:192px;width:1px;height:19px;background:#c3c3c3;"></div>
<div style="left:841px;top:192px;width:1px;height:19px;background:#c3c3c3;"></div>
<div style="left:835px;top:192px;width:6px;height:19px;overflow:hidden;text-align:center;line-height:19px;font-size:13px;color:#333;white-space:pre;letter-spacing:-0.300px;">AJ</div>
<div style="left:905px;top:192px;width:1px;height:19px;background:#c3c3c3;"></div>
<div style="left:842px;top:192px;width:63px;height:19px;overflow:hidden;text-align:center;line-height:19px;font-size:13px;color:#333;white-space:pre;letter-spacing:-0.300px;">AK</div>
<div style="left:969px;top:192px;width:1px;height:19px;background:#c3c3c3;"></div>
<div style="left:906px;top:192px;width:63px;height:19px;overflow:hidden;text-align:center;line-height:19px;font-size:13px;color:#333;white-space:pre;letter-spacing:-0.300px;">AL</div>
<div style="left:1033px;top:192px;width:1px;height:19px;background:#c3c3c3;"></div>
<div style="left:970px;top:192px;width:63px;height:19px;overflow:hidden;text-align:center;line-height:19px;font-size:13px;color:#333;white-space:pre;letter-spacing:-0.300px;">AM</div>
<div style="left:1097px;top:192px;width:1px;height:19px;background:#c3c3c3;"></div>
<div style="left:1034px;top:192px;width:63px;height:19px;overflow:hidden;text-align:center;line-height:19px;font-size:13px;color:#333;white-space:pre;letter-spacing:-0.300px;">AN</div>
<div style="left:1161px;top:192px;width:1px;height:19px;background:#c3c3c3;"></div>
<div style="left:1098px;top:192px;width:63px;height:19px;overflow:hidden;text-align:center;line-height:19px;font-size:13px;color:#333;white-space:pre;letter-spacing:-0.300px;">AO</div>
<div style="left:1225px;top:192px;width:1px;height:19px;background:#c3c3c3;"></div>
<div style="left:1162px;top:192px;width:63px;height:19px;overflow:hidden;text-align:center;line-height:19px;font-size:13px;color:#333;white-space:pre;letter-spacing:-0.300px;">AP</div>
<div style="left:1289px;top:192px;width:1px;height:19px;background:#c3c3c3;"></div>
<div style="left:1226px;top:192px;width:63px;height:19px;overflow:hidden;text-align:center;line-height:19px;font-size:13px;color:#333;white-space:pre;letter-spacing:-0.300px;">AQ</div>
<div style="left:1353px;top:192px;width:1px;height:19px;background:#c3c3c3;"></div>
<div style="left:1290px;top:192px;width:63px;height:19px;overflow:hidden;text-align:center;line-height:19px;font-size:13px;color:#333;white-space:pre;letter-spacing:-0.300px;">AR</div>
<div style="left:1417px;top:192px;width:1px;height:19px;background:#c3c3c3;"></div>
<div style="left:1354px;top:192px;width:63px;height:19px;overflow:hidden;text-align:center;line-height:19px;font-size:13px;color:#333;white-space:pre;letter-spacing:-0.300px;">AS</div>
<div style="left:1481px;top:192px;width:1px;height:19px;background:#c3c3c3;"></div>
<div style="left:1418px;top:192px;width:63px;height:19px;overflow:hidden;text-align:center;line-height:19px;font-size:13px;color:#333;white-space:pre;letter-spacing:-0.300px;">AT</div>
<div style="left:0px;top:212px;width:23px;height:767px;background:#e6e6e6;border-right:1px solid #ababab;"></div>
<div style="left:0;top:212px;width:23px;height:18px;overflow:hidden;border-bottom:1px solid #c3c3c3;"><div style="left:0;bottom:-1px;width:20px;text-align:center;font-size:13px;line-height:17px;height:17px;color:#333;letter-spacing:-0.900px;text-indent:-0.900px;">4</div></div>
<div style="left:0;top:230px;width:23px;height:18px;overflow:hidden;border-bottom:1px solid #c3c3c3;"><div style="left:0;bottom:-1px;width:20px;text-align:center;font-size:13px;line-height:17px;height:17px;color:#333;letter-spacing:-0.900px;text-indent:-0.900px;">5</div></div>
<div style="left:0;top:248px;width:23px;height:18px;overflow:hidden;border-bottom:1px solid #c3c3c3;"><div style="left:0;bottom:-1px;width:20px;text-align:center;font-size:13px;line-height:17px;height:17px;color:#333;letter-spacing:-0.900px;text-indent:-0.900px;">6</div></div>
<div style="left:0;top:266px;width:23px;height:18px;overflow:hidden;border-bottom:1px solid #c3c3c3;"><div style="left:0;bottom:-1px;width:20px;text-align:center;font-size:13px;line-height:17px;height:17px;color:#333;letter-spacing:-0.900px;text-indent:-0.900px;">7</div></div>
<div style="left:0;top:284px;width:23px;height:35px;overflow:hidden;border-bottom:1px solid #c3c3c3;"><div style="left:0;bottom:-1px;width:20px;text-align:center;font-size:13px;line-height:17px;height:17px;color:#333;letter-spacing:-0.900px;text-indent:-0.900px;">8</div></div>
<div style="left:0;top:319px;width:23px;height:6px;overflow:hidden;border-bottom:1px solid #c3c3c3;"><div style="left:0;bottom:-1px;width:20px;text-align:center;font-size:13px;line-height:17px;height:17px;color:#333;letter-spacing:-0.900px;text-indent:-0.900px;">9</div></div>
<div style="left:0;top:325px;width:23px;height:22px;overflow:hidden;border-bottom:1px solid #c3c3c3;"><div style="left:0;bottom:-1px;width:20px;text-align:center;font-size:13px;line-height:17px;height:17px;color:#333;letter-spacing:-0.900px;text-indent:-0.900px;">10</div></div>
<div style="left:0;top:347px;width:23px;height:24px;overflow:hidden;border-bottom:1px solid #c3c3c3;"><div style="left:0;bottom:-1px;width:20px;text-align:center;font-size:13px;line-height:17px;height:17px;color:#333;letter-spacing:-0.900px;text-indent:-0.900px;">11</div></div>
<div style="left:0;top:371px;width:23px;height:24px;overflow:hidden;border-bottom:1px solid #c3c3c3;"><div style="left:0;bottom:-1px;width:20px;text-align:center;font-size:13px;line-height:17px;height:17px;color:#333;letter-spacing:-0.900px;text-indent:-0.900px;">12</div></div>
<div style="left:0;top:395px;width:23px;height:24px;overflow:hidden;border-bottom:1px solid #c3c3c3;"><div style="left:0;bottom:-1px;width:20px;text-align:center;font-size:13px;line-height:17px;height:17px;color:#333;letter-spacing:-0.900px;text-indent:-0.900px;">13</div></div>
<div style="left:0;top:419px;width:23px;height:24px;overflow:hidden;border-bottom:1px solid #c3c3c3;"><div style="left:0;bottom:-1px;width:20px;text-align:center;font-size:13px;line-height:17px;height:17px;color:#333;letter-spacing:-0.900px;text-indent:-0.900px;">14</div></div>
<div style="left:0;top:443px;width:23px;height:29px;overflow:hidden;border-bottom:1px solid #c3c3c3;"><div style="left:0;bottom:-1px;width:20px;text-align:center;font-size:13px;line-height:17px;height:17px;color:#333;letter-spacing:-0.900px;text-indent:-0.900px;">15</div></div>
<div style="left:0;top:472px;width:23px;height:35px;overflow:hidden;border-bottom:1px solid #c3c3c3;"><div style="left:0;bottom:-1px;width:20px;text-align:center;font-size:13px;line-height:17px;height:17px;color:#333;letter-spacing:-0.900px;text-indent:-0.900px;">16</div></div>
<div style="left:0;top:507px;width:23px;height:21px;overflow:hidden;border-bottom:1px solid #c3c3c3;"><div style="left:0;bottom:-1px;width:20px;text-align:center;font-size:13px;line-height:17px;height:17px;color:#333;letter-spacing:-0.900px;text-indent:-0.900px;">17</div></div>
<div style="left:0;top:528px;width:23px;height:47px;overflow:hidden;border-bottom:1px solid #c3c3c3;"><div style="left:0;bottom:-1px;width:20px;text-align:center;font-size:13px;line-height:17px;height:17px;color:#333;letter-spacing:-0.900px;text-indent:-0.900px;">18</div></div>
<div style="left:0;top:575px;width:23px;height:21px;overflow:hidden;border-bottom:1px solid #c3c3c3;"><div style="left:0;bottom:-1px;width:20px;text-align:center;font-size:13px;line-height:17px;height:17px;color:#333;letter-spacing:-0.900px;text-indent:-0.900px;">19</div></div>
<div style="left:0;top:596px;width:23px;height:45px;overflow:hidden;border-bottom:1px solid #c3c3c3;"><div style="left:0;bottom:-1px;width:20px;text-align:center;font-size:13px;line-height:17px;height:17px;color:#333;letter-spacing:-0.900px;text-indent:-0.900px;">20</div></div>
<div style="left:0;top:641px;width:23px;height:17px;overflow:hidden;border-bottom:1px solid #c3c3c3;"><div style="left:0;bottom:-1px;width:20px;text-align:center;font-size:13px;line-height:17px;height:17px;color:#333;letter-spacing:-0.900px;text-indent:-0.900px;">21</div></div>
<div style="left:0;top:658px;width:23px;height:170px;overflow:hidden;border-bottom:1px solid #c3c3c3;background:#d2d2d2;border-right:2px solid #217346;"><div style="left:0;bottom:-1px;width:20px;text-align:center;font-size:13px;line-height:17px;height:17px;color:#217346;letter-spacing:-0.900px;text-indent:-0.900px;">22</div></div>
<div style="left:0;top:828px;width:23px;height:9px;overflow:hidden;border-bottom:1px solid #c3c3c3;"><div style="left:0;bottom:-1px;width:20px;text-align:center;font-size:13px;line-height:17px;height:17px;color:#333;letter-spacing:-0.900px;text-indent:-0.900px;">23</div></div>
<div style="left:0;top:837px;width:23px;height:17px;overflow:hidden;border-bottom:1px solid #c3c3c3;"><div style="left:0;bottom:-1px;width:20px;text-align:center;font-size:13px;line-height:17px;height:17px;color:#333;letter-spacing:-0.900px;text-indent:-0.900px;">24</div></div>
<div style="left:0;top:854px;width:23px;height:17px;overflow:hidden;border-bottom:1px solid #c3c3c3;"><div style="left:0;bottom:-1px;width:20px;text-align:center;font-size:13px;line-height:17px;height:17px;color:#333;letter-spacing:-0.900px;text-indent:-0.900px;">25</div></div>
<div style="left:0;top:871px;width:23px;height:17px;overflow:hidden;border-bottom:1px solid #c3c3c3;"><div style="left:0;bottom:-1px;width:20px;text-align:center;font-size:13px;line-height:17px;height:17px;color:#333;letter-spacing:-0.900px;text-indent:-0.900px;">26</div></div>
<div style="left:0;top:888px;width:23px;height:51px;overflow:hidden;border-bottom:1px solid #c3c3c3;"><div style="left:0;bottom:-1px;width:20px;text-align:center;font-size:13px;line-height:17px;height:17px;color:#333;letter-spacing:-0.900px;text-indent:-0.900px;">27</div></div>
<div style="left:0;top:939px;width:23px;height:22px;overflow:hidden;border-bottom:1px solid #c3c3c3;"><div style="left:0;bottom:-1px;width:20px;text-align:center;font-size:13px;line-height:17px;height:17px;color:#333;letter-spacing:-0.900px;text-indent:-0.900px;">28</div></div>
<div style="left:0;top:961px;width:23px;height:35px;overflow:hidden;border-bottom:1px solid #c3c3c3;"><div style="left:0;bottom:-1px;width:20px;text-align:center;font-size:13px;line-height:17px;height:17px;color:#333;letter-spacing:-0.900px;text-indent:-0.900px;">29</div></div>
<div class="t" style="left:49px;top:212px;height:17px;line-height:17px;font-family:'Liberation Serif', serif;font-size:13.333px;color:#000;font-weight:normal;font-style:normal;letter-spacing:-0.083px;">CS2: Quảng trường Hồ Xương Rồng, P Phan Đình Phùng, T Thái Nguyên</div>
<div class="t" style="left:49px;top:230px;height:17px;line-height:17px;font-family:'Liberation Serif', serif;font-size:13.333px;color:#000;font-weight:normal;font-style:normal;letter-spacing:-0.158px;">CS3: Số 293, Đ Thống Nhất, P Tích Lương, T Thái Nguyên</div>
<div class="t" style="left:49px;top:248px;height:17px;line-height:17px;font-family:'Liberation Serif', serif;font-size:13.333px;color:#000;font-weight:normal;font-style:normal;letter-spacing:-0.193px;">CS4: Số 286. Đ Thái Nguyên, Tổ 12, P Bắc Kạn, T Thái Nguyên</div>
<div class="t" style="left:49px;top:266px;height:17px;line-height:17px;font-family:'Liberation Serif', serif;font-size:13.333px;color:#000;font-weight:normal;font-style:normal;letter-spacing:-0.378px;">MST: 4600307706 - Mail: Huntermailinh@gmail.com</div>
<div class="t" style="left:332px;top:287px;height:30px;line-height:30px;font-family:'Liberation Serif', serif;font-size:24px;color:#000;font-weight:bold;font-style:normal;letter-spacing:-0.083px;">BÁO GIÁ SỬA CHỮA</div>
<div class="t" style="left:49px;top:327px;height:17px;line-height:17px;font-family:'Liberation Serif', serif;font-size:13.333px;color:#000;font-weight:bold;font-style:normal;letter-spacing:-0.230px;">Số phiếu: ##Báo giá.Số báo giá##</div>
<div class="t" style="left:633px;top:327px;height:17px;line-height:17px;font-family:'Liberation Serif', serif;font-size:13.333px;color:#000;font-weight:bold;font-style:normal;letter-spacing:-0.307px;">Ngày tạo : ##Báo giá.Ngày báo giá##</div>
<div style="left:46px;top:346px;width:788px;height:1px;background:#000;"></div>
<div style="left:46px;top:370px;width:788px;height:1px;background:#000;"></div>
<div style="left:46px;top:394px;width:788px;height:1px;background:#000;"></div>
<div style="left:46px;top:418px;width:788px;height:1px;background:#000;"></div>
<div style="left:46px;top:442px;width:788px;height:1px;background:#000;"></div>
<div style="left:46px;top:471px;width:788px;height:1px;background:#000;"></div>
<div style="left:46px;top:506px;width:788px;height:1px;background:#000;"></div>
<div style="left:46px;top:346px;width:1px;height:161px;background:#000;"></div>
<div style="left:457px;top:346px;width:1px;height:161px;background:#000;"></div>
<div style="left:833px;top:346px;width:1px;height:161px;background:#000;"></div>
<div class="t" style="left:49px;top:350px;height:17px;line-height:17px;font-family:'Liberation Serif', serif;font-size:13.333px;color:#000;font-weight:bold;font-style:normal;letter-spacing:-0.381px;">1. Thông tin về Khách hàng</div>
<div class="t" style="left:49px;top:374px;height:17px;line-height:17px;font-family:'Liberation Serif', serif;font-size:13.333px;color:#000;font-weight:normal;font-style:normal;letter-spacing:-0.192px;">Tên chủ xe:</div>
<div class="t" style="left:142px;top:374px;height:17px;line-height:17px;font-family:'Liberation Serif', serif;font-size:13.333px;color:#000;font-weight:bold;font-style:normal;letter-spacing:-0.230px;">##Báo giá.Khách hàng##</div>
<div class="t" style="left:49px;top:398px;height:17px;line-height:17px;font-family:'Liberation Serif', serif;font-size:13.333px;color:#000;font-weight:normal;font-style:normal;letter-spacing:-0.366px;">Địa chỉ:</div>
<div class="t" style="left:142px;top:398px;height:17px;line-height:17px;font-family:'Liberation Serif', serif;font-size:13.333px;color:#000;font-weight:normal;font-style:normal;letter-spacing:-0.108px;">##Báo giá.Địa chỉ##</div>
<div class="t" style="left:49px;top:422px;height:17px;line-height:17px;font-family:'Liberation Serif', serif;font-size:13.333px;color:#000;font-weight:normal;font-style:normal;letter-spacing:-0.108px;">SĐT chủ xe: ##Báo giá.Số điện thoại##</div>
<div class="c" style="left:47px;top:443px;width:270px;height:28px;"><div style="left:2px;top:-3px;width:266px;text-align:left;font-weight:normal;line-height:17px;letter-spacing:-0.22px;">Người mang xe đến: ##Báo giá.Người mang xe<br>đến##</div></div>
<div class="t" style="left:319.5px;top:449px;height:17px;line-height:17px;font-family:'Liberation Serif', serif;font-size:13.333px;color:#000;font-weight:normal;font-style:normal;letter-spacing:-0.406px;">SĐT:</div>
<div class="c" style="left:364px;top:443px;width:93px;height:28px;"><div style="left:2px;top:-3px;width:89px;text-align:left;font-weight:normal;line-height:17px;letter-spacing:-0.08px;">##Báo giá.Số<br>điện thoại giao</div></div>
<div class="t" style="left:49px;top:480px;height:17px;line-height:17px;font-family:'Liberation Serif', serif;font-size:13.333px;color:#000;font-weight:normal;font-style:normal;letter-spacing:-0.045px;">Thời gian khách hàng tới: ##Báo giá.Ngày báo giá##</div>
<div class="t" style="left:460px;top:350px;height:17px;line-height:17px;font-family:'Liberation Serif', serif;font-size:13.333px;color:#000;font-weight:bold;font-style:normal;letter-spacing:-0.349px;">2. Thông tin về xe:</div>
<div class="t" style="left:460px;top:374px;height:17px;line-height:17px;font-family:'Liberation Serif', serif;font-size:13.333px;color:#000;font-weight:normal;font-style:normal;letter-spacing:-0.130px;">Biển số: ##Báo giá.Biển kiểm soát##</div>
<div class="t" style="left:668px;top:374px;height:17px;line-height:17px;font-family:'Liberation Serif', serif;font-size:13.333px;color:#000;font-weight:normal;font-style:normal;letter-spacing:-0.173px;">Hãng xe: ##Báo giá.Hãng xe##</div>
<div class="t" style="left:460px;top:398px;height:17px;line-height:17px;font-family:'Liberation Serif', serif;font-size:13.333px;color:#000;font-weight:normal;font-style:normal;letter-spacing:-0.288px;">Loại xe: ##Báo giá.Loại xe##</div>
<div class="t" style="left:460px;top:422px;height:17px;line-height:17px;font-family:'Liberation Serif', serif;font-size:13.333px;color:#000;font-weight:normal;font-style:normal;letter-spacing:-0.259px;">Số km: ##Báo giá.Số Km##</div>
<div class="c" style="left:666px;top:419px;width:167px;height:23px;"><div style="left:2px;top:-5px;width:163px;text-align:left;font-weight:normal;line-height:17px;letter-spacing:-0.2px;">Ngày đăng kiểm: Loại xe:<br>##Báo giá.Ngày đăng kiểm##</div></div>
<div class="t" style="left:460px;top:448px;height:17px;line-height:17px;font-family:'Liberation Serif', serif;font-size:13.333px;color:#000;font-weight:normal;font-style:normal;letter-spacing:-0.054px;">Ngày hết hạn bảo hiểm: ##Báo giá.Ngày hết hạn BH##</div>
<div class="c" style="left:458px;top:472px;width:375px;height:34px;"><div style="left:2px;top:0px;width:371px;text-align:left;font-weight:normal;line-height:17px;letter-spacing:-0.08px;">Thời gian sửa chữa ước tính: ##Báo giá.Thời gian sửa chữa ước<br>tính##</div></div>
<div class="t" style="left:49px;top:508px;height:17px;line-height:17px;font-family:'Liberation Serif', serif;font-size:13.333px;color:#000;font-weight:bold;font-style:normal;letter-spacing:-0.379px;">3. Yêu cầu của Khách hàng:</div>
<div style="left:46px;top:527px;width:788px;height:1px;background:#000;"></div>
<div style="left:46px;top:574px;width:788px;height:1px;background:#000;"></div>
<div style="left:46px;top:527px;width:1px;height:48px;background:#000;"></div>
<div style="left:833px;top:527px;width:1px;height:48px;background:#000;"></div>
<div class="t" style="left:353px;top:542px;height:17px;line-height:17px;font-family:'Liberation Serif', serif;font-size:13.333px;color:#000;font-weight:normal;font-style:normal;letter-spacing:-0.039px;">##Báo giá.Yêu cầu của khách##</div>
<div class="t" style="left:49px;top:576px;height:17px;line-height:17px;font-family:'Liberation Serif', serif;font-size:13.333px;color:#000;font-weight:bold;font-style:normal;letter-spacing:-0.304px;">4. Nội dung công việc</div>
<div style="left:46px;top:595px;width:788px;height:1px;background:#000;"></div>
<div style="left:46px;top:640px;width:788px;height:1px;background:#000;"></div>
<div style="left:46px;top:657px;width:788px;height:1px;background:#000;"></div>
<div style="left:46px;top:827px;width:788px;height:1px;background:#000;"></div>
<div style="left:46px;top:595px;width:1px;height:233px;background:#000;"></div>
<div style="left:833px;top:595px;width:1px;height:233px;background:#000;"></div>
<div style="left:103px;top:595px;width:1px;height:46px;background:#000;"></div>
<div style="left:103px;top:657px;width:1px;height:171px;background:#000;"></div>
<div style="left:213px;top:595px;width:1px;height:46px;background:#000;"></div>
<div style="left:213px;top:657px;width:1px;height:171px;background:#000;"></div>
<div style="left:352px;top:595px;width:1px;height:46px;background:#000;"></div>
<div style="left:352px;top:657px;width:1px;height:171px;background:#000;"></div>
<div style="left:385px;top:595px;width:1px;height:46px;background:#000;"></div>
<div style="left:385px;top:657px;width:1px;height:171px;background:#000;"></div>
<div style="left:425px;top:595px;width:1px;height:46px;background:#000;"></div>
<div style="left:425px;top:657px;width:1px;height:171px;background:#000;"></div>
<div style="left:495px;top:595px;width:1px;height:46px;background:#000;"></div>
<div style="left:495px;top:657px;width:1px;height:171px;background:#000;"></div>
<div style="left:586px;top:595px;width:1px;height:46px;background:#000;"></div>
<div style="left:586px;top:657px;width:1px;height:171px;background:#000;"></div>
<div style="left:695px;top:595px;width:1px;height:46px;background:#000;"></div>
<div style="left:695px;top:657px;width:1px;height:171px;background:#000;"></div>
<div style="left:759px;top:595px;width:1px;height:46px;background:#000;"></div>
<div style="left:759px;top:657px;width:1px;height:171px;background:#000;"></div>
<div class="c" style="left:47px;top:596px;width:56px;height:44px;"><div style="left:0px;top:13px;width:56px;text-align:center;font-weight:bold;line-height:17px;letter-spacing:-0.33px;">STT</div></div>
<div class="c" style="left:104px;top:596px;width:109px;height:44px;"><div style="left:0px;top:13px;width:109px;text-align:center;font-weight:bold;line-height:17px;letter-spacing:-0.33px;">Mã số</div></div>
<div class="c" style="left:214px;top:596px;width:138px;height:44px;"><div style="left:0px;top:13px;width:138px;text-align:center;font-weight:bold;line-height:17px;letter-spacing:-0.33px;">Tên hàng hóa/dịch vụ</div></div>
<div class="c" style="left:353px;top:596px;width:32px;height:44px;"><div style="left:0px;top:13px;width:32px;text-align:center;font-weight:bold;line-height:17px;letter-spacing:-0.33px;">SL</div></div>
<div class="c" style="left:386px;top:596px;width:39px;height:44px;"><div style="left:0px;top:14px;width:39px;text-align:center;font-weight:bold;line-height:17px;letter-spacing:-0.33px;">ĐVT</div></div>
<div class="c" style="left:426px;top:596px;width:69px;height:44px;"><div style="left:0px;top:13px;width:69px;text-align:center;font-weight:bold;line-height:17px;letter-spacing:-0.33px;">Đơn giá</div></div>
<div class="c" style="left:496px;top:596px;width:90px;height:44px;"><div style="left:0px;top:5px;width:90px;text-align:center;font-weight:bold;line-height:17px;letter-spacing:-0.33px;">Thành tiền<br>(VNĐ)</div></div>
<div class="c" style="left:587px;top:596px;width:108px;height:44px;"><div style="left:0px;top:13px;width:108px;text-align:center;font-weight:bold;line-height:17px;letter-spacing:-0.33px;">Chiết khấu (%)</div></div>
<div class="c" style="left:696px;top:596px;width:63px;height:44px;"><div style="left:0px;top:5px;width:63px;text-align:center;font-weight:bold;line-height:17px;letter-spacing:-0.33px;">Thuế VAT<br>(%)</div></div>
<div class="c" style="left:760px;top:596px;width:73px;height:44px;"><div style="left:0px;top:5px;width:73px;text-align:center;font-weight:bold;line-height:17px;letter-spacing:-0.33px;">Thanh Toán<br>(VNĐ)</div></div>
<div class="t" style="left:49px;top:641px;height:17px;line-height:17px;font-family:'Liberation Serif', serif;font-size:13.333px;color:#000;font-weight:bold;font-style:normal;letter-spacing:-0.342px;">Nhóm theo trường(##Báo giá.Thông tin hàng hóa.Hàng hóa.Loại hàng hóa##)</div>
<div class="t" style="left:527px;top:641px;height:17px;line-height:17px;font-family:'Liberation Serif', serif;font-size:13.333px;color:#000;font-weight:bold;font-style:normal;letter-spacing:-0.547px;">Tổng</div>
<div class="t" style="left:782px;top:641px;height:17px;line-height:17px;font-family:'Liberation Serif', serif;font-size:13.333px;color:#000;font-weight:bold;font-style:normal;letter-spacing:-0.547px;">Tổng</div>
<div class="c" style="left:47px;top:658px;width:56px;height:169px;"><div style="left:2px;top:33px;width:52px;text-align:center;font-weight:normal;line-height:17px;letter-spacing:0.01px;">##Báo<br>giá.Thôn<br>g tin<br>hàng<br>hóa.STT<br>##</div></div>
<div class="c" style="left:104px;top:658px;width:109px;height:169px;"><div style="left:2px;top:59px;width:105px;text-align:left;font-weight:normal;line-height:17px;letter-spacing:0.01px;">##Báo giá.Thông<br>tin hàng hóa.Mã<br>hàng hóa##</div></div>
<div class="c" style="left:214px;top:658px;width:138px;height:169px;"><div style="left:2px;top:59px;width:134px;text-align:left;font-weight:normal;line-height:17px;letter-spacing:0.01px;">##Báo giá.Thông tin<br>hàng hóa.Tên hàng<br>hóa##</div></div>
<div class="c" style="left:353px;top:658px;width:32px;height:169px;"><div style="left:2px;top:0px;width:28px;text-align:center;font-weight:normal;line-height:17px;letter-spacing:0.01px;">##Bá<br>o<br>giá.T<br>hông<br>tin<br>hàng<br>hóa.<br>Số<br>lượn<br>g##</div></div>
<div class="c" style="left:386px;top:658px;width:39px;height:169px;"><div style="left:2px;top:17px;width:35px;text-align:center;font-weight:normal;line-height:17px;letter-spacing:0.01px;">##Báo<br>giá.Th<br>ông<br>tin<br>hàng<br>hóa.Đ<br>ơn vị<br>tính##</div></div>
<div class="c" style="left:426px;top:658px;width:69px;height:169px;"><div style="left:2px;top:42px;width:65px;text-align:right;font-weight:normal;line-height:17px;letter-spacing:0.01px;">##Báo<br>giá.Thông<br>tin hàng<br>hóa.Đơn<br>giá##</div></div>
<div class="c" style="left:496px;top:658px;width:90px;height:169px;"><div style="left:2px;top:42px;width:86px;text-align:right;font-weight:normal;line-height:17px;letter-spacing:0.01px;">##Báo<br>giá.Thông tin<br>hàng<br>hóa.Thành<br>tiền##</div></div>
<div class="c" style="left:587px;top:658px;width:108px;height:169px;"><div style="left:2px;top:59px;width:104px;text-align:center;font-weight:normal;line-height:17px;letter-spacing:0.01px;">##Báo giá.Thông<br>tin hàng hóa.Tỷ lệ<br>chiết khấu##</div></div>
<div class="c" style="left:696px;top:658px;width:63px;height:169px;"><div style="left:2px;top:42px;width:59px;text-align:center;font-weight:normal;line-height:17px;letter-spacing:0.01px;">##Báo<br>giá.Thông<br>tin hàng<br>hóa.Thuế<br>suất##</div></div>
<div class="c" style="left:760px;top:658px;width:73px;height:169px;"><div style="left:2px;top:42px;width:69px;text-align:right;font-weight:normal;line-height:17px;letter-spacing:0.01px;">##Báo<br>giá.Thông<br>tin hàng<br>hóa.Tổng<br>tiền##</div></div>
<div class="t" style="left:49px;top:837px;height:17px;line-height:17px;font-family:'Liberation Serif', serif;font-size:13.333px;color:#000;font-weight:bold;font-style:normal;letter-spacing:-0.425px;">5. Khách hàng thanh toán</div>
<div class="t" style="left:498px;top:837px;height:17px;line-height:17px;font-family:'Liberation Serif', serif;font-size:13.333px;color:#000;font-weight:normal;font-style:normal;letter-spacing:-0.151px;">Tổng tiền trước khi giảm giá</div>
<div class="t" style="left:498px;top:854px;height:17px;line-height:17px;font-family:'Liberation Serif', serif;font-size:13.333px;color:#000;font-weight:normal;font-style:normal;letter-spacing:-0.055px;">Tổng tiền sau giảm giá</div>
<div class="t" style="left:498px;top:871px;height:17px;line-height:17px;font-family:'Liberation Serif', serif;font-size:13.333px;color:#000;font-weight:normal;font-style:normal;letter-spacing:0.188px;">Thuế VAT</div>
<div class="t" style="left:779px;top:837px;height:17px;line-height:17px;font-family:'Liberation Serif', serif;font-size:13.333px;color:#000;font-weight:normal;font-style:normal;letter-spacing:0.047px;">##Báo</div>
<div class="t" style="left:779px;top:854px;height:17px;line-height:17px;font-family:'Liberation Serif', serif;font-size:13.333px;color:#000;font-weight:normal;font-style:normal;letter-spacing:0.047px;">##Báo</div>
<div class="t" style="left:779px;top:871px;height:17px;line-height:17px;font-family:'Liberation Serif', serif;font-size:13.333px;color:#000;font-weight:normal;font-style:normal;letter-spacing:0.047px;">##Báo</div>
<div class="c" style="left:760px;top:888px;width:62px;height:50px;"><div style="left:2px;top:0px;width:58px;text-align:left;font-weight:normal;line-height:17px;letter-spacing:-0.08px;">##Báo<br>giá.Tổng<br>tiền##</div></div>
<div class="t" style="left:498px;top:922px;height:17px;line-height:17px;font-family:'Liberation Serif', serif;font-size:13.333px;color:#000;font-weight:normal;font-style:normal;letter-spacing:0.132px;">Tổng chi phí sau VAT</div>
<div class="t" style="left:68px;top:940px;height:17px;line-height:17px;font-family:'Liberation Serif', serif;font-size:13.333px;color:#000;font-weight:bold;font-style:italic;letter-spacing:-0.061px;">Số tiền bằng chữ:</div>
<div class="t" style="left:191px;top:940px;height:17px;line-height:17px;font-family:'Liberation Serif', serif;font-size:13.333px;color:#000;font-weight:bold;font-style:italic;letter-spacing:-0.174px;">##Hàm chuyển số thành chữ(##Báo giá.Tổng tiền##)##</div>
<div style="left:0;top:212px;width:1448px;height:70px;overflow:hidden;"><svg style="left:0;top:0" width="1448" height="70" viewBox="0 212 1448 70"><path d="M582.700 212C588 213.600 596 215.400 603 215.300C606.500 215.600 606.800 219.800 603 220.600C599 221.600 595.500 222.800 592.400 224.400C597 226.300 604 228.300 611.800 228.800C615 229 619 229.500 620.800 231C622.500 233 621 235 618.500 235.600C615 236.400 611.500 236.800 608.800 237C613 239.500 620 241.300 629.200 241.400C633 241.300 637 240.500 640.500 239.200L652 212Z" fill="#ec2227"/><path d="M702.500 208C708.500 219 704 231 692.400 239.200C699.500 231 702.300 220 698.400 208Z" fill="#ec2227"/><ellipse cx="666.400" cy="219.600" rx="32.500" ry="27.300" fill="#fff"/><path d="M661 195.200a24.500 24.500 0 0 0 0 49h10.500a24.500 24.500 0 0 0 0-49z" fill="#000"/><circle cx="660.2" cy="220.5" r="17.600" fill="none" stroke="#fff" stroke-width="1.700"/><circle cx="660.2" cy="220.5" r="5.800" fill="none" stroke="#fff" stroke-width="1.700"/><circle cx="660.5" cy="220.3" r="1.500" fill="#fff"/><path d="M651.74 217.42L646.48 215.51M646.76 215.61L649.21 211.35M649.39 216.57L651.09 213.48M652.25 224.73L647.31 227.35M647.57 227.21L646.05 222.54M650.05 225.90L648.89 222.58M656.97 228.90L654.97 234.13M655.08 233.85L650.86 231.33M655.97 231.52L652.49 229.43M656.87 229.18L653.86 227.30M663.43 228.90L665.43 234.13M667.78 232.63L662.68 234.58M667.29 226.04L671.70 229.49M672.94 226.99L669.58 231.29M668.89 218.17L674.30 216.72M669.18 218.09L666.42 213.59M665.36 213.13L668.57 208.54M666.02 207.44L670.49 210.57M660.20 211.50L660.20 205.90M660.20 206.20L665.04 207.05M660.20 209.00L663.68 209.54M655.04 213.13L651.83 208.54M649.91 210.57L654.38 207.44" stroke="#fff" stroke-width="1.050" fill="none"/><g stroke="#fff" stroke-width="1.250" fill="none"><path d="M683.500 208c2 6 2.300 12 1 18"/><path d="M686.800 208c2 6 2.300 11 1 16.500"/><path d="M690 208c1.800 5 2 10 1 14.500"/><path d="M693 209c1.300 4 1.500 8 0.800 11.500"/></g><path d="M597.700 246.900C615 245.600 640 245.600 649.500 246.200L655.700 247.900C640 248 615 247.900 597.700 246.900Z" fill="#000"/><path d="M677.500 247.900L683.500 246.200C695 245.600 712 245.700 725.300 246.600C712 247.700 695 248 677.500 247.900Z" fill="#000"/><text x="565.500" y="261.300" font-family="Liberation Sans, sans-serif" font-weight="bold" font-style="italic" font-size="13" textLength="89.500" lengthAdjust="spacingAndGlyphs" fill="#000" stroke="#000" stroke-width="0.700">HUNTER</text><text x="661" y="261.300" font-family="Liberation Sans, sans-serif" font-weight="bold" font-style="italic" font-size="13" textLength="95.500" lengthAdjust="spacingAndGlyphs" fill="#ec2227" stroke="#ec2227" stroke-width="0.700">MAI LINH</text><text x="594" y="271.500" font-family="Liberation Sans, sans-serif" font-weight="bold" font-size="6.400" letter-spacing="1.800" textLength="131.500" lengthAdjust="spacingAndGlyphs" fill="#e0242b" stroke="#e0242b" stroke-width="0.250">TOP AUTO SERVICE</text></svg></div>
<div style="left:424px;top:656px;width:73px;height:173px;border:2px solid #217346;"></div>
<div style="left:493px;top:825px;width:6px;height:6px;background:#217346;border:1px solid #fff;"></div>
<div style="left:0px;top:977px;width:1448px;height:1px;background:#e4e4e4;"></div>
<div style="left:0px;top:978px;width:1448px;height:1px;background:#9e9e9e;"></div>
<div style="left:98px;top:977px;width:56px;height:2px;background:#fff;"></div>
<svg style="left:0px;top:0px;pointer-events:none;" width="1448" height="979" viewBox="0 0 1448 979"><rect x="746" y="129" width="22" height="20" rx="2.500" fill="none" stroke="#ff0000" stroke-width="3.800"/><path d="M701.500 179.500L728 161" stroke="#ff0000" stroke-width="4.200" stroke-linecap="round" fill="none"/><path d="M743 148.500L713.500 153.500L729 174.500Z" fill="#ff0000" stroke="#ff0000" stroke-width="1.500" stroke-linejoin="round"/><rect x="420.500" y="651" width="81.500" height="184" rx="4" fill="none" stroke="#ff0000" stroke-width="4.200"/></svg>
</body></html>
